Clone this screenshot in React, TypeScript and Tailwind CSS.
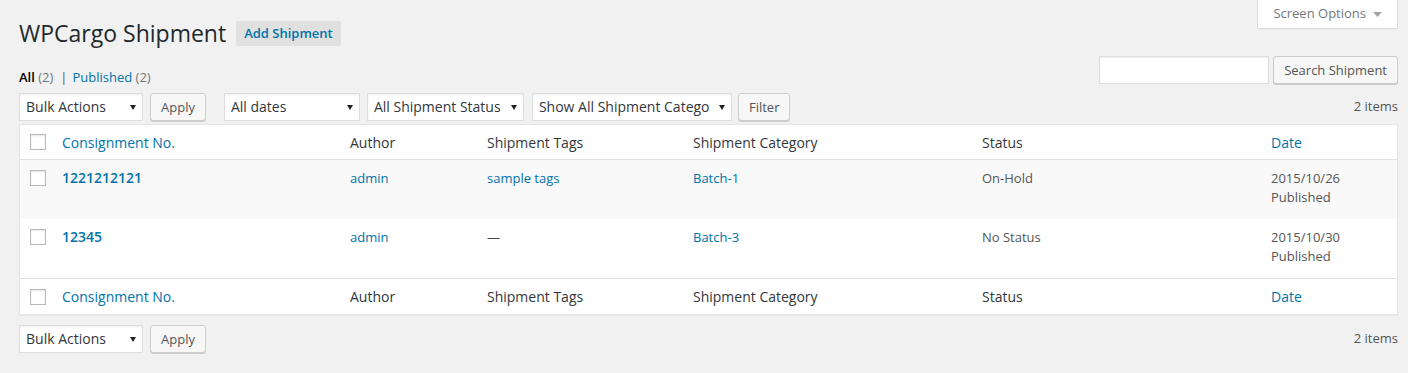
import React from 'react';

const Arrow = () => (
    <svg width="6" height="5" viewBox="0 0 6 5" className="shrink-0">
        <polygon points="0,0 6,0 3,5" fill="#222" />
    </svg>
);

const FakeSelect = ({ label, w }: { label: string; w: string }) => (
    <div className={`${w} flex items-center gap-[10px] h-[28px] border border-[#ddd] bg-white shadow-[inset_0_1px_2px_rgba(0,0,0,0.07)] pl-[6px] pr-[6px] text-[14px] text-[#32373c]`}>
        <span className="flex-1 min-w-0 overflow-hidden whitespace-nowrap leading-[26px]">{label}</span>
        <Arrow />
    </div>
);

const Button = ({ children, className = '' }: { children: React.ReactNode; className?: string }) => (
    <button className={`h-[28px] px-[10px] text-[13px] leading-[26px] text-[#555] bg-[#f7f7f7] border border-[#ccc] rounded-[3px] shadow-[0_1px_0_#ccc] ${className}`}>
        {children}
    </button>
);

const Check = () => (
    <input type="checkbox" className="appearance-none block w-[16px] h-[16px] m-0 border border-[#b4b9be] bg-white shadow-[inset_0_1px_2px_rgba(0,0,0,0.1)]" />
);

const cols = 'grid grid-cols-[32px_288px_137px_206px_289px_289px_1fr]';

const HeadRow = ({ border }: { border: string }) => (
    <div className={`${cols} h-[35px] items-center text-[14px] text-[#32373c] ${border} border-[#e1e1e1]`}>
        <div className="pl-[10px]"><Check /></div>
        <div className="px-[10px] text-[#0073aa]">Consignment No.</div>
        <div className="px-[10px]">Author</div>
        <div className="px-[10px]">Shipment Tags</div>
        <div className="px-[10px]">Shipment Category</div>
        <div className="px-[10px]">Status</div>
        <div className="px-[10px] text-[#0073aa]">Date</div>
    </div>
);

interface Shipment {
    no: string;
    tags: string | null;
    category: string;
    status: string;
    date: string;
}

const rows: Shipment[] = [
    { no: '1221212121', tags: 'sample tags', category: 'Batch-1', status: 'On-Hold', date: '2015/10/26' },
    { no: '12345', tags: null, category: 'Batch-3', status: 'No Status', date: '2015/10/30' },
];

export default function App() {
    return (
        <div className="min-h-screen bg-[#f1f1f1] font-['Open_Sans',sans-serif] text-[13px] text-[#444]">
            <div className="relative pl-[19px] pr-[10px]">
                <div className="absolute right-[10px] top-0 flex items-center gap-[7px] h-[29px] px-[15px] bg-white border border-t-0 border-[#ddd] shadow-[0_1px_1px_-1px_rgba(0,0,0,0.1)] text-[13px] text-[#72777c]">
                    <span>Screen Options</span>
                    <svg width="9" height="5" viewBox="0 0 9 5">
                        <polygon points="0,0 9,0 4.5,5" fill="#a0a5aa" />
                    </svg>
                </div>

                <div className="flex items-center pt-[19px]">
                    <h1 className="text-[23px] leading-[29px] font-normal text-[#23282d]">WPCargo Shipment</h1>
                    <a className="ml-[10px] h-[25px] px-[8px] leading-[25px] text-[13px] font-semibold text-[#0073aa] bg-[#e0e0e0] rounded-[2px]">Add Shipment</a>
                </div>

                <div className="flex justify-between items-start mt-[8px]">
                    <div className="mt-[8px] leading-[26px] text-[13px] text-[#555]">
                        <span className="font-semibold text-black">All</span>
                        <span className="text-[#72777c]"> (2)</span>
                        <span className="ml-[7px] mr-[5px]">|</span>
                        <span className="text-[#0073aa]">Published</span>
                        <span className="text-[#72777c]"> (2)</span>
                    </div>
                    <div className="flex gap-[4px]">
                        <input className="w-[170px] h-[28px] border border-[#ddd] bg-white shadow-[inset_0_1px_2px_rgba(0,0,0,0.07)]" />
                        <Button>Search Shipment</Button>
                    </div>
                </div>

                <div className="flex items-center h-[28px] mt-[3px]">
                    <FakeSelect label="Bulk Actions" w="w-[124px]" />
                    <Button className="ml-[7px]">Apply</Button>
                    <div className="ml-[18px]"><FakeSelect label="All dates" w="w-[136px]" /></div>
                    <div className="ml-[7px]"><FakeSelect label="All Shipment Status" w="w-[157px]" /></div>
                    <div className="ml-[8px]"><FakeSelect label="Show All Shipment Category" w="w-[200px]" /></div>
                    <Button className="ml-[6px]">Filter</Button>
                    <span className="ml-auto text-[#555]">2 items</span>
                </div>

                <div className="mt-[3px] border border-[#e5e5e5] bg-white shadow-[0_1px_1px_rgba(0,0,0,0.04)]">
                    <HeadRow border="border-b" />
                    {rows.map((r, i) => (
                        <div key={r.no} className={`${cols} h-[59px] text-[13px] leading-[18.6px] ${i % 2 === 0 ? 'bg-[#f9f9f9]' : 'bg-white border-b border-[#e1e1e1] h-[60px]'}`}>
                            <div className="pl-[10px] pt-[10px]"><Check /></div>
                            <div className="px-[10px] pt-[9px] text-[14px] font-semibold text-[#0073aa]">{r.no}</div>
                            <div className="px-[10px] pt-[9px] text-[#0073aa]">admin</div>
                            <div className={`px-[10px] pt-[9px] ${r.tags ? 'text-[#0073aa]' : 'text-[#444]'}`}>{r.tags ?? '—'}</div>
                            <div className="px-[10px] pt-[9px] text-[#0073aa]">{r.category}</div>
                            <div className="px-[10px] pt-[9px] text-[#555]">{r.status}</div>
                            <div className="px-[10px] pt-[9px] text-[#555]">
                                <div>{r.date}</div>
                                <div>Published</div>
                            </div>
                        </div>
                    ))}
                    <HeadRow border="" />
                </div>

                <div className="flex items-center h-[28px] mt-[10px]">
                    <FakeSelect label="Bulk Actions" w="w-[124px]" />
                    <Button className="ml-[7px]">Apply</Button>
                    <span className="ml-auto text-[#555]">2 items</span>
                </div>
            </div>
        </div>
    );
}
